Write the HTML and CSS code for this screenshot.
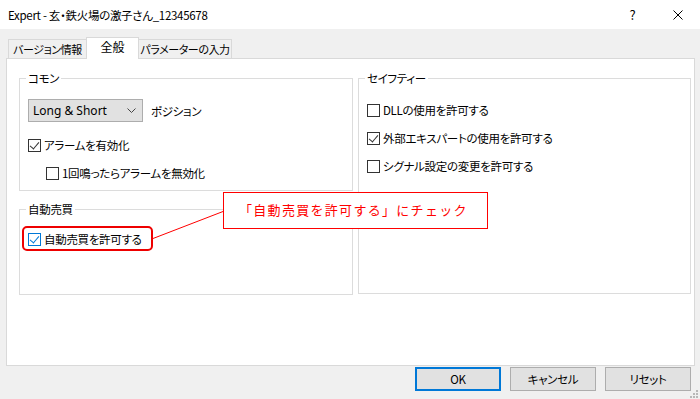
FILE: index.html
```html
<!DOCTYPE html>
<html lang="ja">
<head>
  <meta charset="UTF-8">
  <title>Expert</title>
  <link rel="stylesheet" href="styles.css">
</head>
<body>
  <div class="titlebar">
    <span class="title-text">Expert - 玄・鉄火場の激子さん_12345678</span>
    <span class="cap-btn">?</span>
    <span class="cap-btn">
      <svg width="10" height="10" viewBox="0 0 10 10"><path d="M0.5 0.5 L9.5 9.5 M9.5 0.5 L0.5 9.5" stroke="#000" stroke-width="1"/></svg>
    </span>
  </div>

  <div class="tabs">
    <div class="tab tab-info">バージョン情報</div>
    <div class="tab tab-active">全般</div>
    <div class="tab tab-params">パラメーターの入力</div>
  </div>

  <div class="panel">
    <div class="col">
      <div class="group group-common">
        <div class="group-title">コモン</div>
        <div class="select-row">
          <div class="select">
            <span>Long &amp; Short</span>
            <svg width="9" height="5" viewBox="0 0 9 5"><path d="M0.5 0.5 L4.5 4.5 L8.5 0.5" fill="none" stroke="#444" stroke-width="1"/></svg>
          </div>
          <span class="select-label">ポジション</span>
        </div>
        <div class="check-row row-alarm"><span class="box checked"></span>アラームを有効化</div>
        <div class="check-row row-sub"><span class="box"></span>1回鳴ったらアラームを無効化</div>
      </div>

      <div class="group group-auto">
        <div class="group-title">自動売買</div>
        <div class="frame-wrap">
          <div class="frame">
            <div class="check-row"><span class="box checked focus"></span>自動売買を許可する</div>
          </div>
        </div>
      </div>
    </div>

    <div class="col">
      <div class="group group-safety">
        <div class="group-title">セイフティー</div>
        <div class="check-row row-first"><span class="box"></span>DLLの使用を許可する</div>
        <div class="check-row row-next"><span class="box checked"></span>外部エキスパートの使用を許可する</div>
        <div class="check-row row-next"><span class="box"></span>シグナル設定の変更を許可する</div>
      </div>
    </div>
  </div>

  <div class="footer">
    <button class="btn btn-ok">OK</button>
    <button class="btn">キャンセル</button>
    <button class="btn">リセット</button>
  </div>

  <!-- annotation overlay -->
  <svg class="annot-line" width="700" height="399" viewBox="0 0 700 399">
    <line x1="153" y1="238.5" x2="223" y2="211.5" stroke="#f00" stroke-width="1"/>
  </svg>
  <div class="callout">「自動売買を許可する」にチェック</div>

  <svg class="grip" width="8" height="8" viewBox="0 0 8 8">
    <rect x="6" y="0" width="2" height="2" fill="#b8b8b8"/>
    <rect x="3" y="3" width="2" height="2" fill="#b8b8b8"/>
    <rect x="6" y="3" width="2" height="2" fill="#b8b8b8"/>
    <rect x="0" y="6" width="2" height="2" fill="#b8b8b8"/>
    <rect x="3" y="6" width="2" height="2" fill="#b8b8b8"/>
    <rect x="6" y="6" width="2" height="2" fill="#b8b8b8"/>
  </svg>
</body>
</html>
```

FILE: styles.css
```css
* { margin: 0; padding: 0; box-sizing: border-box; }
body {
  width: 700px;
  height: 399px;
  overflow: hidden;
  position: relative;
  background: #f0f0f0;
  font-family: "Noto Sans CJK JP", sans-serif;
  font-feature-settings: "palt";
  font-size: 11.5px;
  letter-spacing: -0.3px;
  color: #000;
}

/* title bar */
.titlebar {
  height: 29px;
  background: #fff;
  display: flex;
  align-items: center;
  padding-left: 8px;
}
.title-text { flex: 1; font-size: 11.5px; letter-spacing: -0.3px; }
.cap-btn {
  width: 45px;
  height: 29px;
  display: flex;
  align-items: center;
  justify-content: center;
  font-size: 13px;
}

/* tabs */
.tabs {
  height: 29px;
  display: flex;
  align-items: flex-end;
  padding-left: 8px;
}
.tab {
  height: 19px;
  border: 1px solid #d9d9d9;
  border-bottom: none;
  background: #f0f0f0;
  display: flex;
  align-items: center;
  justify-content: center;
  line-height: 16px;
  white-space: nowrap;
  font-size: 11px;
  letter-spacing: -0.4px;
}
.tab-info { width: 79px; }
.tab-active {
  width: 53px;
  height: 22px;
  margin-left: -1px;
  margin-bottom: -1px;
  background: #fff;
  position: relative;
  z-index: 1;
  padding-bottom: 3px;
  font-size: 12px;
  letter-spacing: 0;
}
.tab-params { width: 94px; margin-left: -1px; }

/* panel */
.panel {
  margin-left: 6px;
  width: 689px;
  height: 308px;
  border: 1px solid #d9d9d9;
  background: #fff;
  display: grid;
  grid-template-columns: 334px 333px;
  column-gap: 5px;
  align-items: start;
  padding: 19px 0 0 12px;
}
.col {
  display: flex;
  flex-direction: column;
  gap: 18px;
}
.group {
  border: 1px solid #dcdcdc;
  padding: 0 8px;
}
.group-common { height: 113px; }
.group-auto { height: 86px; }
.group-safety { height: 216px; }
.group-title {
  display: table;
  margin: -9px 0 0 -2px;
  padding: 0 2px;
  background: #fff;
  line-height: 16px;
}

/* select */
.select-row {
  display: flex;
  align-items: center;
  margin-top: 13px;
}
.select {
  width: 115px;
  height: 23px;
  border: 1px solid #adadad;
  background: #e1e1e1;
  display: flex;
  align-items: center;
  justify-content: space-between;
  padding: 0 6px 0 4px;
  font-family: "Noto Sans", sans-serif;
  font-size: 12px;
  letter-spacing: 0;
}
.select-label { margin-left: 8px; }

/* checkboxes */
.check-row {
  height: 18px;
  display: flex;
  align-items: center;
  line-height: 16px;
}
.row-alarm { margin-top: 14px; }
.row-sub { margin-top: 10px; padding-left: 18px; }
.row-first { margin-top: 15px; }
.row-next { margin-top: 10px; }
.box {
  width: 13px;
  height: 13px;
  border: 1px solid #333;
  background: #fff;
  margin-right: 3px;
  flex: none;
  position: relative;
}
.box.checked::after {
  content: "";
  position: absolute;
  left: 3px;
  top: 0px;
  width: 4px;
  height: 8px;
  border: solid #333;
  border-width: 0 1px 1px 0;
  transform: rotate(40deg);
}
.box.focus { border-color: #0078d7; }
.box.focus::after { border-color: #0078d7; border-width: 0 1.5px 1.5px 0; left: 3px; }

/* red frame around the auto trading checkbox */
.frame-wrap { display: flex; margin-top: 9px; }
.frame {
  margin-left: -6px;
  border: 2px solid #e00;
  border-radius: 5px;
  padding: 2px 9px 1px 4px;
}

/* buttons */
.footer {
  display: flex;
  justify-content: flex-end;
  gap: 9px;
  padding: 1px 9px 0 0;
}
.btn {
  width: 86px;
  height: 24px;
  border: 1px solid #adadad;
  background: #e1e1e1;
  font-family: "Noto Sans CJK JP", sans-serif;
  font-feature-settings: "palt";
  font-size: 11.5px;
  letter-spacing: -0.3px;
  color: #000;
}
.btn-ok { border: 2px solid #0078d7; }

/* annotation */
.annot-line {
  position: absolute;
  left: 0;
  top: 0;
  pointer-events: none;
}
.callout {
  position: absolute;
  left: 223px;
  top: 192px;
  width: 265px;
  height: 37px;
  border: 1px solid #f00;
  background: #fff;
  color: #f00;
  font-size: 13px;
  font-feature-settings: normal;
  letter-spacing: 1.3px;
  line-height: 33px;
  padding-left: 15px;
}
.grip {
  position: absolute;
  right: 2px;
  bottom: 1px;
}
```
